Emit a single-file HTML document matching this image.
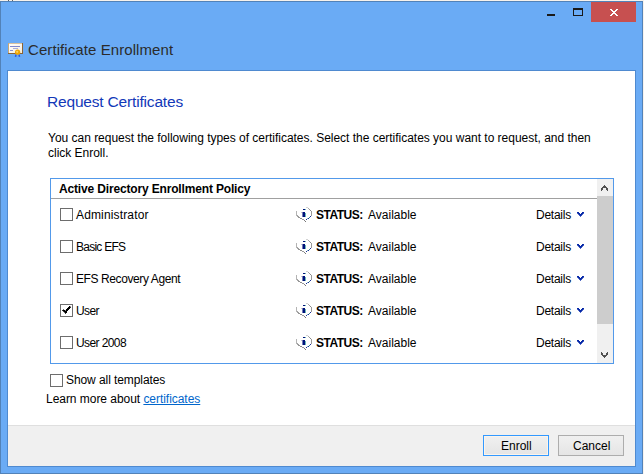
<!DOCTYPE html>
<html><head><meta charset="utf-8">
<style>
*{margin:0;padding:0;box-sizing:border-box}
html,body{width:644px;height:474px;overflow:hidden;background:#f7f2ec}
body{position:relative;font-family:"Liberation Sans",sans-serif;font-size:12px;color:#000}
.a{position:absolute;white-space:nowrap;line-height:1}
svg{position:absolute;overflow:visible}
#win{position:absolute;left:0;top:1px;width:643px;height:473px;background:#6aabf5;border:1px solid #5282b8}
#content{position:absolute;left:7px;top:70px;width:629px;height:397px;background:#fff;border:1px solid #4f8ad0}
#footer{position:absolute;left:8px;top:425px;width:627px;height:41px;background:#f0f0f0;border-top:1px solid #dfdfdf}
.close{position:absolute;left:591px;top:2px;width:45px;height:20px;background:#c75050}
.list{position:absolute;left:50px;top:178px;width:564px;height:186px;border:1px solid #5299ea;background:#fff}
.hdrline{position:absolute;left:51px;top:198px;width:546px;height:1px;background:#a0a0a0}
.sb{position:absolute;left:597px;top:179px;width:16px;height:184px;background:#f0f0f0}
.thumb{position:absolute;left:597px;top:196px;width:16px;height:128px;background:#cdcdcd}
.cb{position:absolute;width:13px;height:13px;border:1px solid #6d6d6d;background:#fff}
.btn{position:absolute;top:435px;width:66px;height:21px;border:1px solid #adadad;background:linear-gradient(#f0f0f0,#e5e5e5)}
.btn.def{border-color:#3399ff;box-shadow:inset 0 0 0 1px #fbf4ec}
</style></head><body>
<svg width="0" height="0" style="position:absolute">
 <defs>
  <g id="chev" fill="#0628a8">
   <rect x="0" y="0" width="2" height="1"/><rect x="5" y="0" width="2" height="1"/>
   <rect x="1" y="1" width="2" height="1"/><rect x="4" y="1" width="2" height="1"/>
   <rect x="0" y="1" width="1" height="1" opacity=".7"/><rect x="6" y="1" width="1" height="1" opacity=".7"/>
   <rect x="2" y="2" width="3" height="1"/>
   <rect x="1" y="2" width="1" height="1" opacity=".7"/><rect x="5" y="2" width="1" height="1" opacity=".7"/>
   <rect x="3" y="3" width="1" height="1"/>
   <rect x="2" y="3" width="1" height="1" opacity=".8"/><rect x="4" y="3" width="1" height="1" opacity=".8"/>
   <rect x="3" y="4" width="1" height="1" opacity=".7"/>
  </g>
  <g id="infoi">
   <rect x="10" y="0" width="2" height="1" fill="#d4d4d4"/>
   <rect x="12" y="1" width="1" height="1" fill="#a8a8a8"/>
   <rect x="13" y="2" width="1" height="1" fill="#989898"/>
   <rect x="14" y="3" width="1" height="1" fill="#888"/>
   <rect x="15" y="4" width="1" height="5" fill="#9a9a9a"/>
   <rect x="14" y="9" width="1" height="1" fill="#1c2e98"/>
   <rect x="13" y="10" width="1" height="1" fill="#3a8a92"/>
   <rect x="12" y="11" width="1" height="1" fill="#1c2e98"/>
   <rect x="11" y="11" width="1" height="1" fill="#4a9aa2" opacity=".7"/>
   <rect x="10" y="12" width="1" height="1" fill="#1c2e98"/>
   <rect x="0" y="4" width="1" height="5" fill="#b4b4b4"/>
   <rect x="1" y="8" width="1" height="2" fill="#a4a4a4"/>
   <rect x="2" y="9" width="1" height="2" fill="#9a9a9a"/>
   <rect x="3" y="10" width="1" height="1" fill="#909090"/>
   <rect x="4" y="11" width="2" height="1" fill="#8a8a8a"/>
   <rect x="6" y="12" width="2" height="1" fill="#9a9a9a"/>
   <rect x="8" y="13" width="1" height="1" fill="#808080"/>
   <rect x="9" y="14" width="1" height="1" fill="#777"/>
   <rect x="7" y="2" width="2" height="1" fill="#00127a"/>
   <rect x="9" y="2" width="1" height="1" fill="#2a9a9a" opacity=".7"/>
   <rect x="5" y="5" width="1" height="1" fill="#c8c8c8"/>
   <rect x="6" y="5" width="1" height="5" fill="#00127a" opacity=".55"/>
   <rect x="7" y="5" width="2" height="5" fill="#00127a"/>
   <rect x="9" y="6" width="1" height="4" fill="#2a9a9a" opacity=".7"/>
  </g>
 </defs>
</svg>
<div id="win"></div>
<div style="position:absolute;left:8px;top:0;width:1px;height:1px;background:#666"></div>
<div style="position:absolute;left:12px;top:0;width:1px;height:1px;background:#666"></div>
<!-- titlebar -->
<svg style="left:8px;top:43px" width="16" height="15">
 <defs><linearGradient id="cg" x1="0" y1="0" x2="1" y2="1"><stop offset="0" stop-color="#fff"/><stop offset="1" stop-color="#f3ecdc"/></linearGradient></defs>
 <rect x="0" y="0" width="15" height="11" fill="#b08850"/>
 <rect x="0" y="0" width="14" height="1" fill="#d8c2a0"/>
 <rect x="0" y="0" width="1" height="10" fill="#c8a878"/>
 <rect x="14" y="0" width="1" height="11" fill="#8a6434"/>
 <rect x="0" y="10" width="15" height="1" fill="#8a6434"/>
 <rect x="1" y="1" width="13" height="9" fill="url(#cg)"/>
 <rect x="2" y="3" width="10" height="1" fill="#8088cc"/>
 <rect x="5" y="5" width="5" height="1" fill="#a8aedc"/>
 <rect x="2" y="7" width="3" height="1" fill="#8890d0"/>
 <path d="M8 11.5 L7.5 13.8 M11 11.5 L11.5 13.8" stroke="#2a58e0" stroke-width="1.5" fill="none"/>
 <circle cx="9.6" cy="9.2" r="2.6" fill="#f2a400"/>
 <circle cx="9.2" cy="8.8" r="1.1" fill="#fcd460"/>
</svg>
<div style="position:absolute;left:547px;top:14px;width:8px;height:2px;background:#1a1a1a"></div>
<div style="position:absolute;left:573px;top:8px;width:10px;height:8px;border:1px solid #1a1a1a;border-top-width:2px"></div>
<div class="close"></div>
<svg style="left:610px;top:9px" width="8" height="7" fill="#fff"><rect x="0" y="0" width="2" height="1"/><rect x="6" y="0" width="2" height="1"/><rect x="1" y="1" width="2" height="1"/><rect x="5" y="1" width="2" height="1"/><rect x="2" y="2" width="4" height="1"/><rect x="3" y="3" width="2" height="1"/><rect x="2" y="4" width="4" height="1"/><rect x="1" y="5" width="2" height="1"/><rect x="5" y="5" width="2" height="1"/><rect x="0" y="6" width="2" height="1"/><rect x="6" y="6" width="2" height="1"/></svg>
<div id="content"></div>
<div id="footer"></div>

<div class="a" style="left:28px;top:42px;font-size:15px;letter-spacing:0.08px;color:#2b2b2b">Certificate Enrollment</div>
<div class="a" style="left:47px;top:94px;font-size:15.5px;letter-spacing:-0.18px;color:#1238b8">Request Certificates</div>
<div class="a" style="left:48px;top:131px;line-height:15px;letter-spacing:-0.017px">You can request the following types of certificates. Select the certificates you want to request, and then<br>click Enroll.</div>

<div class="list"></div>
<div class="hdrline"></div>
<div class="sb"></div>
<div class="thumb"></div>
<svg style="left:601px;top:185px" width="7" height="6" fill="#505050"><rect x="3" y="0" width="1" height="1"/><rect x="2" y="1" width="3" height="1"/><rect x="1" y="2" width="2" height="1"/><rect x="4" y="2" width="2" height="1"/><rect x="3" y="2" width="1" height="1"/><rect x="0" y="3" width="2" height="2"/><rect x="5" y="3" width="2" height="2"/><rect x="0" y="5" width="1" height="1"/><rect x="6" y="5" width="1" height="1"/></svg>
<svg style="left:601px;top:352px" width="7" height="6" fill="#505050"><rect x="3" y="5" width="1" height="1"/><rect x="2" y="4" width="3" height="1"/><rect x="1" y="3" width="2" height="1"/><rect x="4" y="3" width="2" height="1"/><rect x="3" y="3" width="1" height="1"/><rect x="0" y="1" width="2" height="2"/><rect x="5" y="1" width="2" height="2"/><rect x="0" y="0" width="1" height="1"/><rect x="6" y="0" width="1" height="1"/></svg>
<div class="a" style="left:59px;top:183px;font-weight:bold;letter-spacing:-0.16px">Active Directory Enrollment Policy</div>

<div class="cb" style="left:60px;top:208px"></div>
<div class="a" style="left:76px;top:209px;letter-spacing:0.15px">Administrator</div>
<svg class="info" style="left:296px;top:207px" width="16" height="16"><use href="#infoi"/></svg>
<div class="a" style="left:316px;top:209px;font-weight:bold;letter-spacing:-0.5px">STATUS:</div>
<div class="a" style="left:368px;top:209px">Available</div>
<div class="a" style="left:536px;top:209px;letter-spacing:-0.25px">Details</div>
<svg class="chev" style="left:577px;top:212px" width="7" height="5"><use href="#chev"/></svg>
<div class="cb" style="left:60px;top:240px"></div>
<div class="a" style="left:76px;top:241px;letter-spacing:-0.75px">Basic EFS</div>
<svg class="info" style="left:296px;top:239px" width="16" height="16"><use href="#infoi"/></svg>
<div class="a" style="left:316px;top:241px;font-weight:bold;letter-spacing:-0.5px">STATUS:</div>
<div class="a" style="left:368px;top:241px">Available</div>
<div class="a" style="left:536px;top:241px;letter-spacing:-0.25px">Details</div>
<svg class="chev" style="left:577px;top:244px" width="7" height="5"><use href="#chev"/></svg>
<div class="cb" style="left:60px;top:272px"></div>
<div class="a" style="left:76px;top:273px;letter-spacing:-0.4px">EFS Recovery Agent</div>
<svg class="info" style="left:296px;top:271px" width="16" height="16"><use href="#infoi"/></svg>
<div class="a" style="left:316px;top:273px;font-weight:bold;letter-spacing:-0.5px">STATUS:</div>
<div class="a" style="left:368px;top:273px">Available</div>
<div class="a" style="left:536px;top:273px;letter-spacing:-0.25px">Details</div>
<svg class="chev" style="left:577px;top:276px" width="7" height="5"><use href="#chev"/></svg>
<div class="cb" style="left:60px;top:304px"><svg width="11" height="11" style="position:absolute;left:0;top:0" fill="#000"><rect x="8" y="1" width="1" height="1"/><rect x="9" y="1" width="1" height="1" opacity="0.4"/><rect x="7" y="2" width="1" height="1"/><rect x="8" y="2" width="1" height="1"/><rect x="9" y="2" width="1" height="1" opacity="0.8"/><rect x="6" y="3" width="1" height="1"/><rect x="7" y="3" width="1" height="1"/><rect x="8" y="3" width="1" height="1"/><rect x="2" y="4" width="1" height="1" opacity="0.6"/><rect x="5" y="4" width="1" height="1"/><rect x="6" y="4" width="1" height="1"/><rect x="7" y="4" width="1" height="1"/><rect x="1" y="5" width="1" height="1" opacity="0.8"/><rect x="2" y="5" width="1" height="1"/><rect x="3" y="5" width="1" height="1"/><rect x="5" y="5" width="1" height="1"/><rect x="6" y="5" width="1" height="1"/><rect x="4" y="5" width="1" height="1" opacity="0.5"/><rect x="2" y="6" width="1" height="1" opacity="0.7"/><rect x="3" y="6" width="1" height="1"/><rect x="4" y="6" width="1" height="1"/><rect x="5" y="6" width="1" height="1"/><rect x="3" y="7" width="1" height="1" opacity="0.6"/><rect x="4" y="7" width="1" height="1"/><rect x="5" y="7" width="1" height="1"/><rect x="4" y="8" width="1" height="1" opacity="0.8"/></svg></div>
<div class="a" style="left:76px;top:305px;letter-spacing:-0.6px">User</div>
<svg class="info" style="left:296px;top:303px" width="16" height="16"><use href="#infoi"/></svg>
<div class="a" style="left:316px;top:305px;font-weight:bold;letter-spacing:-0.5px">STATUS:</div>
<div class="a" style="left:368px;top:305px">Available</div>
<div class="a" style="left:536px;top:305px;letter-spacing:-0.25px">Details</div>
<svg class="chev" style="left:577px;top:308px" width="7" height="5"><use href="#chev"/></svg>
<div class="cb" style="left:60px;top:336px"></div>
<div class="a" style="left:76px;top:337px;letter-spacing:-0.6px">User 2008</div>
<svg class="info" style="left:296px;top:335px" width="16" height="16"><use href="#infoi"/></svg>
<div class="a" style="left:316px;top:337px;font-weight:bold;letter-spacing:-0.5px">STATUS:</div>
<div class="a" style="left:368px;top:337px">Available</div>
<div class="a" style="left:536px;top:337px;letter-spacing:-0.25px">Details</div>
<svg class="chev" style="left:577px;top:340px" width="7" height="5"><use href="#chev"/></svg>

<div class="cb" style="left:50px;top:374px"></div>
<div class="a" style="left:66px;top:374px;letter-spacing:-0.08px">Show all templates</div>
<div class="a" style="left:46px;top:393px;letter-spacing:-0.04px">Learn more about <span style="color:#0066cc;text-decoration:underline">certificates</span></div>

<div class="btn def" style="left:483px"></div>
<div class="btn" style="left:558px"></div>
<div class="a" style="left:501px;top:440px">Enroll</div>
<div class="a" style="left:573px;top:440px">Cancel</div>
</body></html>
